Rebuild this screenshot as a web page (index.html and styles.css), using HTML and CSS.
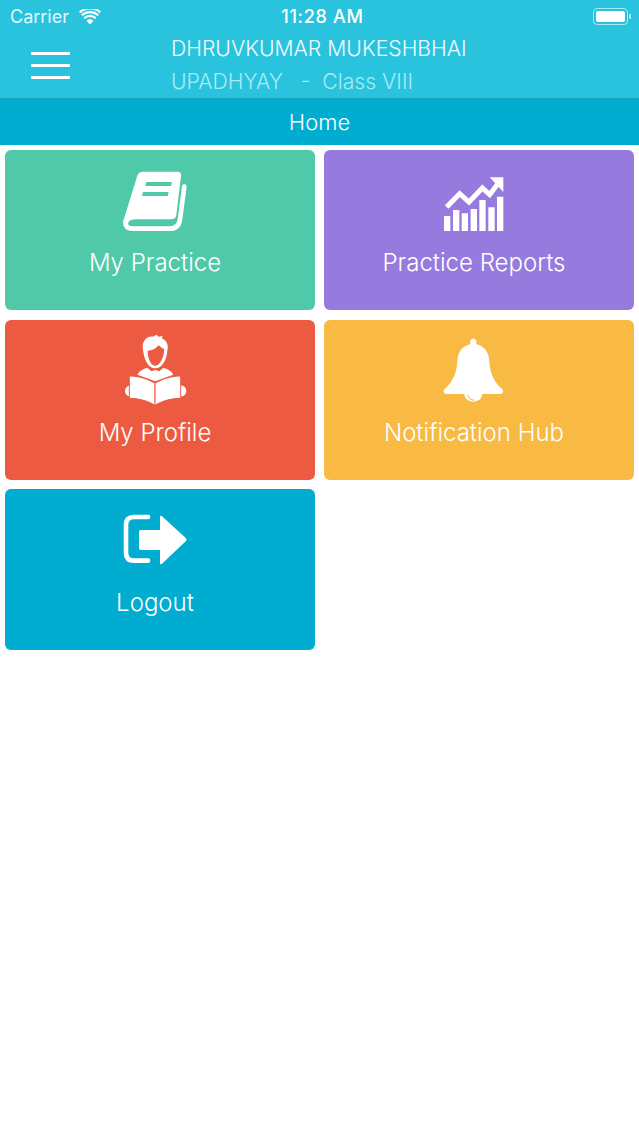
FILE: index.html
```html
<!DOCTYPE html>
<html>
<head>
    <title>Home</title>
    <link rel="stylesheet" href="styles.css">
</head>
<body>
    <div class="topbar">
        <div class="status">
            <div class="status-left">
                <span>Carrier</span>
                <svg class="wifi" viewBox="0 0 22 16" width="22" height="16">
                    <path d="M11 15.500l-3.400-3.800a4.800 4.800 0 0 1 6.800 0z" fill="#fff"/>
                    <path d="M5.200 9.200a8.500 8.500 0 0 1 11.600 0M2.800 6.300a12.200 12.200 0 0 1 16.400 0M.8 3.300a15.500 15.500 0 0 1 20.400 0" fill="none" stroke="#fff" stroke-width="2.200"/>
                </svg>
            </div>
            <div class="status-time">11:28 AM</div>
            <div class="status-right">
                <div class="battery"><div class="battery-fill"></div></div>
                <div class="battery-tip"></div>
            </div>
        </div>
        <div class="userbar">
            <div class="burger"><span></span><span></span><span></span></div>
            <div class="user">
                <div class="user-name">DHRUVKUMAR MUKESHBHAI</div>
                <div class="user-class">UPADHYAY &nbsp; - &nbsp;Class VIII</div>
            </div>
        </div>
    </div>
    <div class="titlebar">Home</div>

    <div class="menu">
        <a class="tile green">
            <svg class="icon" viewBox="0 0 330 240" width="110" height="80">
                <path d="M130 35H232Q245 35 243 48L229 165Q227 178 214 178H110Q85 178 85 190L70 182L112 47Q116 35 130 35Z" fill="#fff"/>
                <path d="M253 80L240 178Q236 206 210 206H98Q76 206 76 186" fill="none" stroke="#fff" stroke-width="14" stroke-linecap="round"/>
                <path d="M139 66H216L213 78H136ZM129 96H206L203 108H126Z" fill="#50c9a9"/>
            </svg>
            <span>My Practice</span>
        </a>
        <a class="tile purple">
            <svg class="icon" viewBox="0 0 330 240" width="110" height="80">
                <path d="M75 168H94V213H75ZM102 150H121V213H102ZM128 160H147V213H128ZM155 147H174V213H155ZM181 120H200V213H181ZM208 142H227V213H208ZM234 110H253V213H234Z" fill="#fff"/>
                <path d="M83 141L122 101L150 126L190 84L212 104L236 72" fill="none" stroke="#fff" stroke-width="15"/>
                <path d="M212 52H253V96Z" fill="#fff"/>
            </svg>
            <span>Practice Reports</span>
        </a>
        <a class="tile red">
            <svg class="icon" viewBox="-30 0 330 240" width="110" height="80">
                <path d="M98 50C98 30 113 18 128 20L140 14L145 20L158 18L155 25C172 32 176 48 172 62C170 90 156 115 136 115C114 115 101 88 98 50Z" fill="#fff"/>
                <path d="M113 62C125 62 138 56 146 46C152 52 158 56 163 58C162 82 150 107 136 107C122 107 113 84 113 62Z" fill="#ed5a42"/>
                <path d="M82 134C88 122 100 116 112 113L124 124L136 120L148 124L160 113C172 116 184 122 190 134L136 154Z" fill="#fff"/>
                <circle cx="62" cy="183" r="17" fill="#fff"/>
                <circle cx="212" cy="183" r="17" fill="#fff"/>
                <path d="M58 138C85 138 112 146 135 160V226C112 212 85 205 58 205Z" fill="#fff" stroke="#ed5a42" stroke-width="3"/>
                <path d="M212 138C185 138 158 146 135 160V226C158 212 185 205 212 205Z" fill="#fff" stroke="#ed5a42" stroke-width="3"/>
            </svg>
            <span>My Profile</span>
        </a>
        <a class="tile yellow">
            <svg class="icon" viewBox="-30 0 330 240" width="110" height="80">
                <path d="M133 26C140 26 144 32 142 42C165 48 180 65 181 95C183 135 200 160 220 178C225 184 222 192 214 192H52C44 192 41 184 46 178C66 160 83 135 85 95C86 65 101 48 124 42C122 32 126 26 133 26Z" fill="#fff"/>
                <path d="M106 190H160C160 206 148 215 133 215C118 215 106 206 106 190Z" fill="#fff"/>
                <path d="M116 194C118 204 125 210 137 211" fill="none" stroke="#f8ba43" stroke-width="3"/>
            </svg>
            <span>Notification Hub</span>
        </a>
        <a class="tile blue">
            <svg class="icon" viewBox="-30 -18 330 240" width="110" height="80">
                <path d="M114 36H72Q48 36 48 60V143Q48 167 72 167H114" fill="none" stroke="#fff" stroke-width="14" stroke-linecap="round"/>
                <path d="M92 75H150V36Q150 30 156 34L228 100Q232 104 228 108L156 176Q150 180 150 174V135H92Q87 135 87 130V80Q87 75 92 75Z" fill="#fff"/>
            </svg>
            <span>Logout</span>
        </a>
    </div>
</body>
</html>
```

FILE: styles.css
```css
body {
    margin: 0;
    background-color: #fff;
    font-family: Inter, "Liberation Sans", sans-serif;
    color: #fff;
}
.topbar {
    height: 98px;
    background-color: #29c3de;
    border-bottom: 1px solid #17a5c0;
}
.status {
    height: 33px;
    display: flex;
    align-items: center;
    justify-content: space-between;
    padding: 0 8px 0 10px;
    font-size: 18px;
    position: relative;
}
.status-left {
    display: flex;
    align-items: center;
    gap: 10px;
    color: #e4f8fc;
}
.status-time {
    position: absolute;
    left: 6px;
    right: 0;
    text-align: center;
    font-weight: 500;
    letter-spacing: 0.7px;
}
.status-right {
    display: flex;
    align-items: center;
    gap: 1px;
}
.battery {
    width: 29px;
    height: 11px;
    padding: 2px;
    border: 1px solid #a5e9f5;
    border-radius: 4px;
}
.battery-fill {
    height: 100%;
    background-color: #fff;
    border-radius: 2px;
}
.battery-tip {
    width: 2px;
    height: 5px;
    background-color: #a5e9f5;
}
.userbar {
    display: flex;
    height: 65px;
}
.burger {
    width: 39px;
    margin: 19px 0 0 31px;
    display: flex;
    flex-direction: column;
    gap: 9px;
}
.burger span {
    height: 3px;
    background-color: #fff;
    border-radius: 1px;
}
.user {
    margin: -1px 0 0 101px;
    font-size: 21.200px;
    font-weight: 350;
    line-height: 33px;
}
.user-name {
    color: #f0fbfe;
}
.user-class {
    color: #a8ebf7;
}
.titlebar {
    height: 46px;
    background-color: #00acd0;
    text-align: center;
    font-size: 22px;
    font-weight: 350;
    line-height: 46px;
}
.menu {
    display: grid;
    grid-template-columns: 310px 310px;
    grid-template-rows: 160px 160px 161px;
    column-gap: 9px;
    row-gap: 9.600px;
    padding: 5px;
}
.tile {
    border-radius: 6px;
    display: flex;
    flex-direction: column;
    align-items: center;
    padding-right: 10px;
    font-size: 24px;
    font-weight: 350;
}
.tile span {
    margin-top: 8px;
    line-height: 30px;
}
.blue span {
    margin-top: 9px;
}
.icon {
    margin-top: 10px;
}
.green { background-color: #50c9a9; }
.purple { background-color: #967add; }
.red { background-color: #ed5a42; }
.yellow { background-color: #f8ba43; }
.blue { background-color: #00acd0; }
```
